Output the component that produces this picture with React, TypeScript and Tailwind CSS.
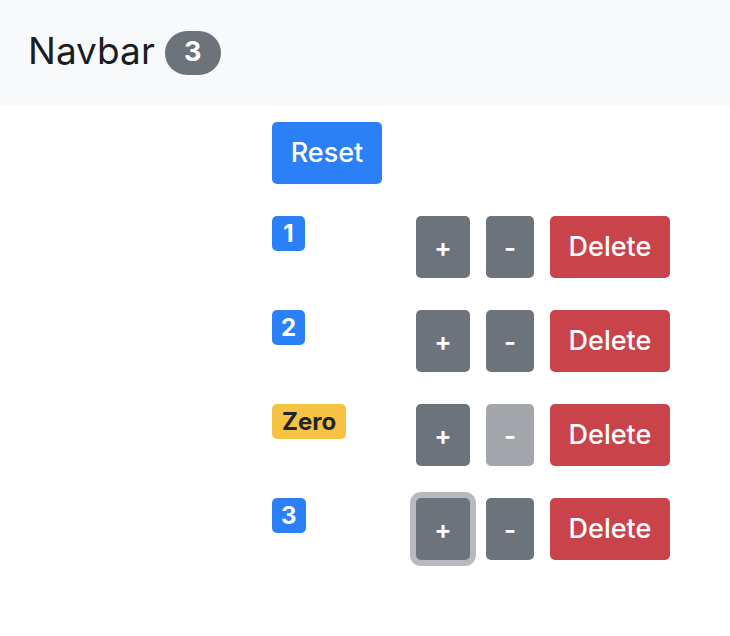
const counters = [
  { id: 1, value: 1 },
  { id: 2, value: 2 },
  { id: 3, value: 0 },
  { id: 4, value: 3 },
];

const Counter = ({ value, focused }: { value: number; focused?: boolean }) => {
  const isZero = value === 0;
  return (
    <div className="flex items-start">
      <div className="w-[144px]">
        <span
          className={
            isZero
              ? "inline-flex h-[35px] items-center rounded-[5px] bg-[#f6c244] px-[10px] text-[24px] font-bold leading-none text-[#212529]"
              : "inline-flex h-[35px] min-w-[33px] items-center justify-center rounded-[5px] bg-[#2b80f7] px-[9px] text-[24px] font-bold leading-none text-white"
          }
        >
          {isZero ? "Zero" : value}
        </span>
      </div>
      <button
        className={
          focused
            ? "flex h-[62px] w-[54px] items-center justify-center rounded-[5px] bg-[#6c737a] text-[26px] font-semibold text-white ring-[6px] ring-[#b6babe]"
            : "flex h-[62px] w-[54px] items-center justify-center rounded-[5px] bg-[#6c737a] text-[26px] font-semibold text-white"
        }
      >
        +
      </button>
      <button
        className={
          isZero
            ? "ml-4 flex h-[62px] w-[48px] items-center justify-center rounded-[5px] bg-[#a2a6ab] text-[26px] font-semibold text-white"
            : "ml-4 flex h-[62px] w-[48px] items-center justify-center rounded-[5px] bg-[#6c737a] text-[26px] font-semibold text-white"
        }
      >
        -
      </button>
      <button className="ml-4 flex h-[62px] w-[120px] items-center justify-center rounded-[5px] bg-[#c9434b] text-[27px] font-medium text-white">
        Delete
      </button>
    </div>
  );
};

const App = () => {
  return (
    <div className="min-h-[636px] bg-white font-['Inter',sans-serif]">
      <nav className="flex h-[105px] items-center bg-[#f8f9fa] px-[28px]">
        <span className="-mt-[4px] text-[37px] font-normal leading-none text-[#1b1e21]">Navbar</span>
        <span className="ml-[10px] flex h-[44px] w-[56px] items-center justify-center rounded-full bg-[#6c737a] text-[27px] font-bold text-white">
          {counters.filter((c) => c.value > 0).length}
        </span>
      </nav>
      <main className="pl-[272px] pt-[17px]">
        <button className="flex h-[62px] w-[110px] items-center justify-center rounded-[5px] bg-[#2b80f7] text-[27px] font-medium text-white">
          Reset
        </button>
        <div className="mt-[32px] flex flex-col gap-[32px]">
          {counters.map((c, i) => (
            <Counter key={c.id} value={c.value} focused={i === 3} />
          ))}
        </div>
      </main>
    </div>
  );
};

export default App;
